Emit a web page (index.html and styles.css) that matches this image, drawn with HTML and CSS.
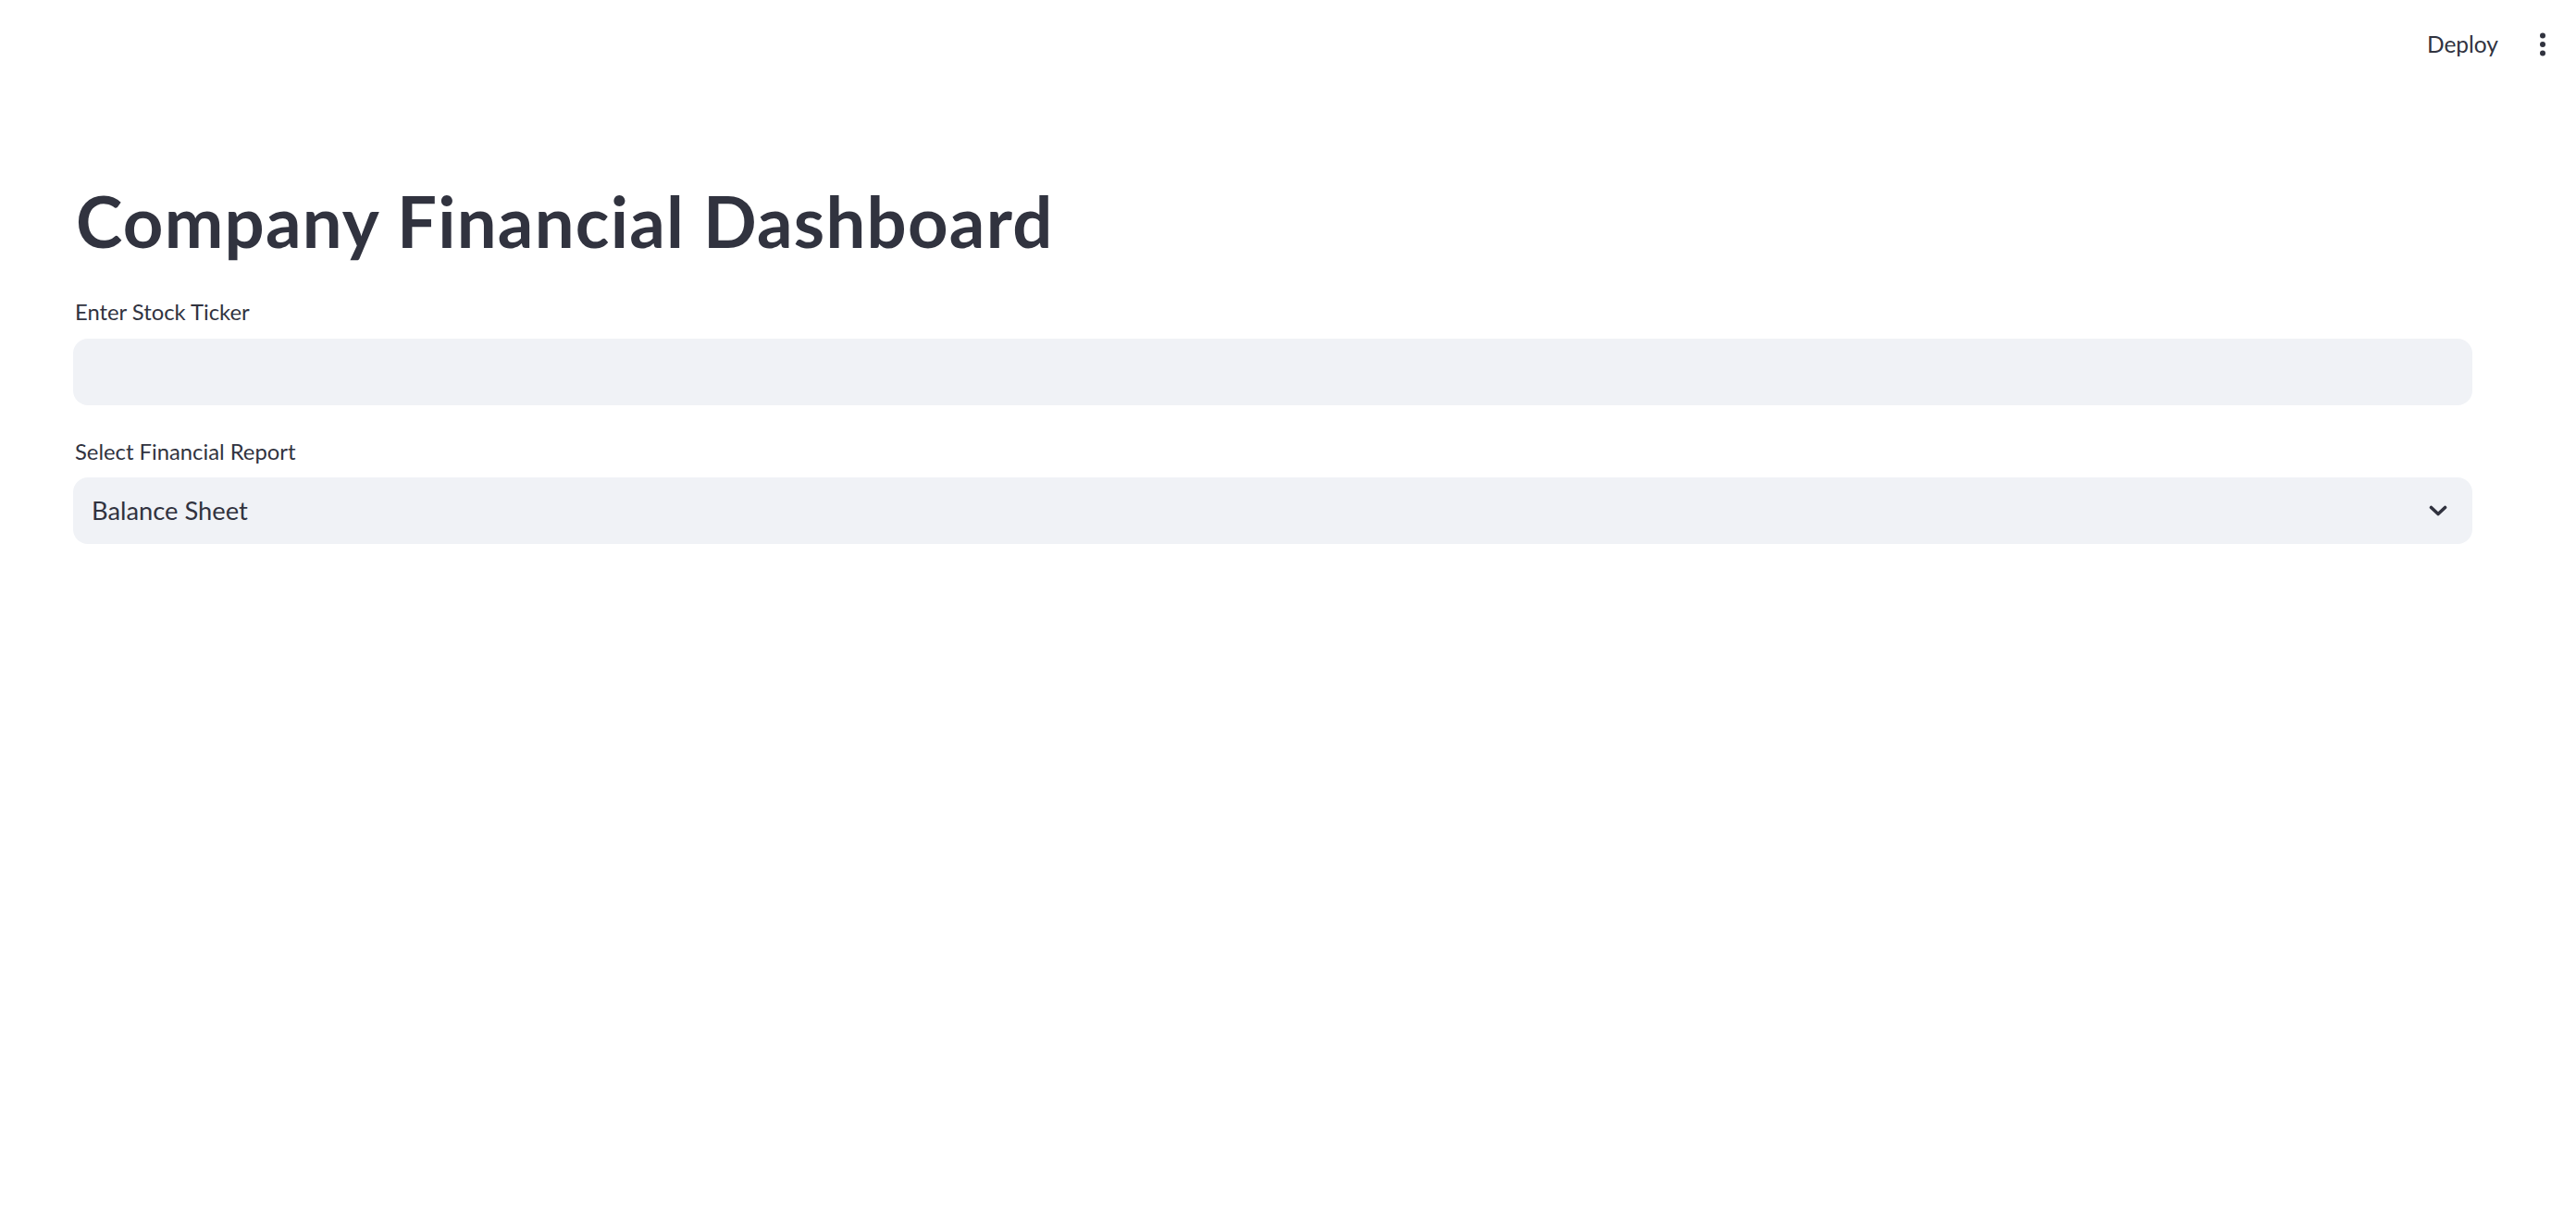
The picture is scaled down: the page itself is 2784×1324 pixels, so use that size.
FILE: index.html
```html
<!DOCTYPE html>
<html lang="en">
<head>
<meta charset="utf-8">
<title>Company Financial Dashboard</title>
<link rel="stylesheet" href="styles.css">
</head>
<body>
<header class="topbar">
  <span class="deploy">Deploy</span>
  <span class="menu" aria-label="Main menu">
    <svg width="8" height="26" viewBox="0 0 8 26"><circle cx="4" cy="3.5" r="3"/><circle cx="4" cy="13" r="3"/><circle cx="4" cy="22.5" r="3"/></svg>
  </span>
</header>
<main class="main">
  <h1 class="title">Company Financial Dashboard</h1>
  <div class="field">
    <label class="label" for="ticker">Enter Stock Ticker</label>
    <input class="textbox" id="ticker" type="text">
  </div>
  <div class="field">
    <span class="label">Select Financial Report</span>
    <div class="select">
      <span class="select-value">Balance Sheet</span>
      <svg class="chevron" width="20" height="12" viewBox="0 0 20 12"><path d="M2.5 2.5 L10 9.5 L17.5 2.5" fill="none" stroke="#31333f" stroke-width="3.6" stroke-linecap="round" stroke-linejoin="round"/></svg>
    </div>
  </div>
</main>
</body>
</html>
```
FILE: styles.css
```css
html, body {
  margin: 0;
  padding: 0;
  background: #ffffff;
}
body {
  font-family: Lato, "Open Sans", sans-serif;
  color: #31333f;
  width: 2784px;
  height: 1324px;
  overflow: hidden;
}
.topbar {
  height: 95px;
  display: flex;
  align-items: center;
  justify-content: flex-end;
  padding-right: 32px;
  gap: 44px;
}
.deploy {
  font-size: 24.5px;
  line-height: 30px;
}
.menu {
  display: flex;
  align-items: center;
}
.menu svg {
  fill: #31333f;
  display: block;
}
.main {
  width: 2593px;
  padding-left: 79px;
}
.title {
  margin: 98px 0 0 0;
  font-size: 76px;
  letter-spacing: 1.25px;
  line-height: 1.2;
  font-weight: 700;
  padding-left: 3px;
}
.field {
  display: flex;
  flex-direction: column;
}
.label {
  font-size: 23.8px;
  line-height: 30px;
  padding-left: 2px;
  margin-bottom: 14px;
}
.field:nth-of-type(1) .label {
  margin-top: 38px;
}
.field + .field .label {
  margin-top: 35px;
}
.field + .field .label + .select {
  margin-top: -1px;
}
.textbox {
  box-sizing: border-box;
  height: 72px;
  width: 100%;
  border: 0;
  border-radius: 16px;
  background: #f0f2f6;
  outline: none;
  font: inherit;
}
.select {
  box-sizing: border-box;
  height: 72px;
  border-radius: 16px;
  background: #f0f2f6;
  display: flex;
  align-items: center;
  justify-content: space-between;
  padding: 0 27px 0 20px;
}
.select-value {
  font-size: 27.3px;
  line-height: 1.2;
}
.chevron {
  display: block;
}
```
